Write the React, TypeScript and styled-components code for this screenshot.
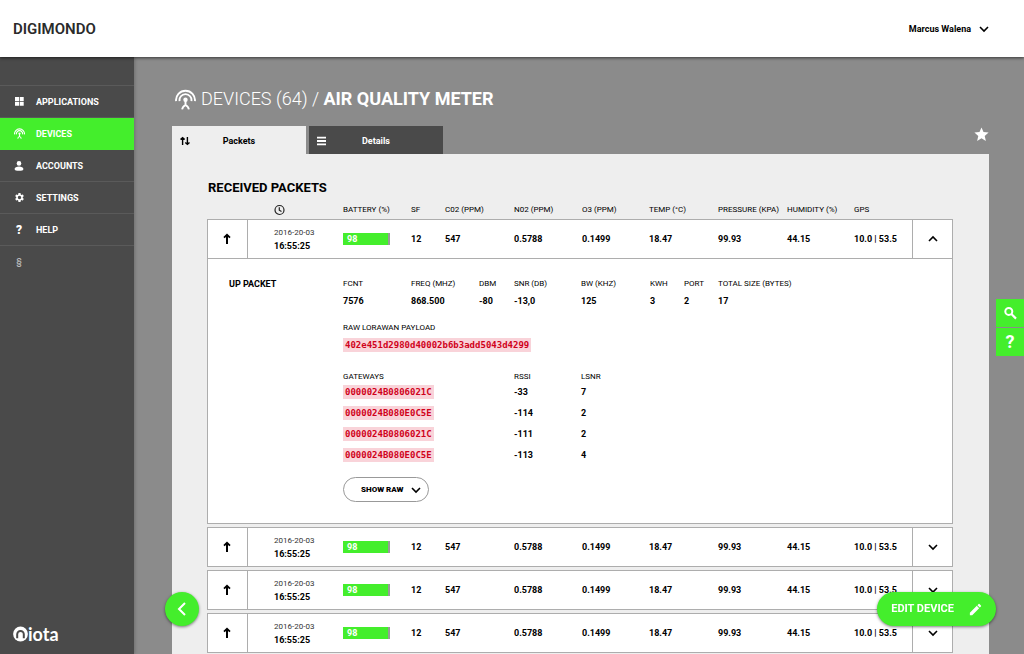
import React, { useState } from "react";
import styled, { createGlobalStyle, css } from "styled-components";
import { MdEdit, MdSettings, MdStar } from "react-icons/md";

const green = "#44ee2c";
const line = "#adadad";

const GlobalStyle = createGlobalStyle`
  * { box-sizing: border-box; }
  body {
    margin: 0;
    background: #8b8b8b;
    color: #000;
    font-family: Roboto, "Liberation Sans", sans-serif;
    font-size: 9px;
    line-height: 12px;
  }
  button { font: inherit; color: inherit; border: 0; padding: 0; background: none; cursor: pointer; }
  a { color: inherit; text-decoration: none; }
  h1, h2, h3, ul, dl, dd { margin: 0; padding: 0; font-size: inherit; list-style: none; }
  svg { display: block; flex: none; }
`;

const Shell = styled.div`
  min-height: 100vh;
  display: flex;
  flex-direction: column;
`;

const Header = styled.header`
  position: relative;
  z-index: 2;
  height: 57px;
  padding: 0 35px 0 13px;
  display: flex;
  align-items: center;
  justify-content: space-between;
  background: #fff;
  box-shadow: 0 1px 3px rgba(0, 0, 0, 0.6);
`;

const Brand = styled.a`
  font-size: 15px;
  line-height: 20px;
  font-weight: 600;
  color: #2b2b2b;
`;

const UserButton = styled.button`
  display: flex;
  align-items: center;
  gap: 8px;
  font-weight: 700;
`;

const Body = styled.div`
  flex: 1;
  display: flex;
`;

const Sidebar = styled.aside`
  width: 134px;
  flex: none;
  display: flex;
  flex-direction: column;
  justify-content: space-between;
  padding: 28px 0 11px;
  background: #4a4a4a;
  color: #fff;
  box-shadow: 1px 0 3px rgba(0, 0, 0, 0.2);
`;

const NavList = styled.ul`
  border-top: 1px solid #5a5a5a;
`;

const NavLink = styled.a<{ $active?: boolean; $quiet?: boolean }>`
  height: 32px;
  padding-left: 13px;
  display: grid;
  grid-template-columns: 12px 1fr;
  column-gap: 11px;
  align-items: center;
  justify-items: center;
  border-bottom: 1px solid #5a5a5a;
  font-weight: 700;

  span { justify-self: start; }

  ${(p) => p.$active && css`
    background: ${green};
    border-color: ${green};
  `}
  ${(p) => p.$quiet && css`
    border-color: transparent;
    color: #bbb;
    font-weight: 500;
  `}
`;

const Mark = styled.b`
  font-size: 12px;
`;

const Niota = styled.a`
  display: flex;
  align-items: center;
  padding-left: 13px;
  font: 700 18px/18px Lato, sans-serif;
`;

const Main = styled.main`
  flex: 1;
  min-width: 0;
  display: flex;
  flex-direction: column;
  padding: 28px 35px 0 38px;
`;

const Title = styled.h1`
  display: flex;
  align-items: center;
  gap: 5px;
  height: 28px;
  margin-bottom: 13px;
  padding-left: 3px;
  color: #fff;
  font-size: 18px;
  font-weight: 300;
  white-space: nowrap;

  b { font-weight: 700; }
`;

const TabBar = styled.div`
  display: flex;
  gap: 3px;
  height: 28px;
`;

const Tab = styled.button<{ $active?: boolean }>`
  width: 134px;
  display: grid;
  grid-template-columns: 10px 1fr 10px;
  align-items: center;
  padding: 2px 8px 0;
  font-weight: 700;
  background: ${(p) => (p.$active ? "#eee" : "#4a4a4a")};
  color: ${(p) => (p.$active ? "#000" : "#fff")};
`;

const StarButton = styled.button`
  margin: 0 -1px 0 auto;
  align-self: flex-start;
  color: #fff;
`;

const Panel = styled.section`
  flex: 1;
  padding: 26px 36px 0 35px;
  background: #eee;
`;

const PanelTitle = styled.h2`
  padding-left: 1px;
  font-size: 13px;
  line-height: 16px;
`;

const PacketTable = styled.table`
  width: 100%;
  margin-top: 7px;
  display: flex;
  flex-direction: column;
  gap: 3px;
`;

const HeadGroup = styled.thead`
  display: block;
  margin-bottom: -1px;
  border: solid transparent;
  border-width: 0 1px;
`;

const Packet = styled.tbody`
  display: block;
  background: #fff;
  border: 1px solid ${line};
`;

const PacketRow = styled.tr`
  display: grid;
  grid-template-columns: 40px 95fr 68fr 34fr 69fr 68fr 67fr 69fr 69fr 67fr 58fr 40px;
  align-items: center;
`;

const HeadCell = styled.th`
  height: 14px;
  padding: 0;
  font-size: 8px;
  line-height: 14px;
  font-weight: 400;
  text-align: left;
  white-space: nowrap;
`;

const ClockCell = styled(HeadCell)`
  padding-left: 26px;
`;

const Cell = styled.td`
  padding: 0;
  font-weight: 700;
  white-space: nowrap;
`;

const TimeCell = styled(Cell)`
  padding-left: 26px;

  small {
    display: block;
    margin-bottom: 1px;
    font-size: 8px;
    font-weight: 400;
    color: #333;
  }
`;

const EdgeCell = styled(Cell)<{ $side: "left" | "right" }>`
  height: 38px;
  display: grid;
  place-items: center;
  border-${(p) => p.$side}: 1px solid ${line};

  button {
    width: 100%;
    height: 100%;
    display: grid;
    place-items: center;
  }
`;

const Battery = styled.div`
  width: 47px;
  background: #999;
  color: #fff;
`;

const BatteryLevel = styled.div`
  height: 12px;
  padding-left: 4px;
  background: ${green};
`;

const DetailRow = styled.tr`
  display: block;
  border-top: 1px solid ${line};
`;

const DetailCell = styled.td`
  display: grid;
  grid-template-columns: 40px 95fr 68fr 68fr 35fr 67fr 69fr 34fr 34fr 234fr;
  padding: 19px 0 21px;
`;

const DetailTitle = styled.h3`
  grid-column: 1 / 3;
  padding-left: 21px;
`;

const FieldList = styled.dl`
  display: contents;
`;

const Field = styled.div`
  white-space: nowrap;

  dt { font-size: 8px; margin-bottom: 5px; }
  dd { font-weight: 700; }
`;

const PayloadField = styled.div`
  grid-column: 3 / -1;
  margin-top: 15px;

  dt { font-size: 8px; margin-bottom: 4px; }
  dd { display: flex; }
`;

const Code = styled.code`
  display: inline-block;
  padding: 0 2px;
  background: #f9d3d9;
  color: #d0021b;
  font: 700 9px/14px "DejaVu Sans Mono", monospace;
`;

const GatewayTable = styled.table`
  grid-column: 3 / -1;
  margin-top: 19px;
  border-spacing: 0;

  thead, tbody { display: block; }
  tbody { display: grid; row-gap: 7px; margin-top: 2px; }
  tr { display: grid; grid-template-columns: 171fr 67fr 371fr; }
  th, td { padding: 0; text-align: left; }
  th { font-size: 8px; font-weight: 400; }
  td { font-weight: 700; display: flex; align-items: center; height: 14px; }
`;

const RawButton = styled.button`
  grid-column: 3 / -1;
  justify-self: start;
  margin-top: 15px;
  width: 86px;
  height: 25px;
  padding: 0 7px 0 17px;
  display: flex;
  align-items: center;
  justify-content: space-between;
  border: 1px solid #999;
  border-radius: 13px;
  font-size: 8px;
  font-weight: 900;
`;

const SideTools = styled.div`
  position: fixed;
  right: 0;
  top: 299px;
  z-index: 3;
  display: grid;
  gap: 1px;
`;

const ToolButton = styled.button`
  width: 28px;
  height: 28px;
  display: grid;
  place-items: center;
  background: ${green};
  color: #fff;
  font-size: 18px;
  font-weight: 700;
`;

const FloatingButton = styled.button`
  position: fixed;
  bottom: 28px;
  z-index: 3;
  height: 34px;
  display: flex;
  align-items: center;
  justify-content: center;
  border-radius: 17px;
  background: ${green};
  color: #fff;
  box-shadow: 0 1px 3px rgba(0, 0, 0, 0.5);
`;

const BackButton = styled(FloatingButton)`
  left: 165px;
  width: 34px;
`;

const EditButton = styled(FloatingButton)`
  right: 28px;
  gap: 14px;
  padding: 0 13px 0 14px;
  font-size: 11px;
  font-weight: 700;
`;

const Chevron = ({ up }: { up?: boolean }) => (
  <svg width="10" height="10" viewBox="0 0 10 10" fill="none" stroke="currentColor" strokeWidth="1.6">
    <path d={up ? "M1 7l4-4 4 4" : "M1 3l4 4 4-4"} />
  </svg>
);

const ArrowUp = () => (
  <svg width="9" height="12" viewBox="0 0 9 12" fill="none" stroke="currentColor">
    <path d="M4 11V2" strokeWidth="2" />
    <path d="M1 4.6L4 1.8l3 2.800" strokeWidth="1.8" />
  </svg>
);

const SwapIcon = () => (
  <svg width="10" height="10" viewBox="0 0 10 10" fill="none" stroke="currentColor" strokeWidth="1.4">
    <path d="M2.6 9V1.6M.5 3.6l2.100-2 2.100 2M7.400 1v7.400M5.300 6.400l2.100 2 2.100-2" />
  </svg>
);

const MenuIcon = () => (
  <svg width="10" height="10" viewBox="0 0 10 10" stroke="currentColor" strokeWidth="1.8">
    <path d="M0 1.6h9M0 5h9M0 8.400h9" />
  </svg>
);

const Antenna = ({ size, weight }: { size: number; weight: number }) => (
  <svg width={size} height={size} viewBox="0 0 20 20" fill="none" stroke="currentColor" strokeWidth={weight}>
    <path d="M1 11.600a9.050 9.050 0 1 1 18 0M4.400 11.600a5.700 5.700 0 1 1 11.200 0" />
    <circle cx="10" cy="10.200" r="2.100" fill="currentColor" stroke="none" />
    <path d="M10 11v4.600M6.800 19.400c.2-2 1.400-3.200 3.200-4.200 1.800 1 3 2.200 3.200 4.200" />
  </svg>
);

const GridIcon = () => (
  <svg width="9" height="9" viewBox="0 0 9 9" fill="currentColor">
    <path d="M0 0h4v4H0zM4.700 0h4v4h-4zM0 4.700h4v4H0zM4.700 4.700h4v4h-4z" />
  </svg>
);

const PersonIcon = () => (
  <svg width="10" height="10" viewBox="0 0 10 10" fill="currentColor">
    <circle cx="5" cy="2.400" r="2.300" />
    <path d="M.6 8c0-1.600 2-2.500 4.400-2.500S9.400 6.400 9.400 8 7.400 9.800 5 9.800.6 9.600.6 8z" />
  </svg>
);

const ClockIcon = () => (
  <svg width="11" height="14" viewBox="0 0 11 14" fill="none" stroke="#222" strokeWidth="1.2">
    <circle cx="5.500" cy="7" r="4.500" />
    <path d="M5.300 4.200v3l2.200 1.400" />
  </svg>
);

const SearchIcon = () => (
  <svg width="14" height="14" viewBox="0 0 14 14" fill="none" stroke="currentColor" strokeWidth="2">
    <circle cx="5.800" cy="5.400" r="3.500" />
    <path d="M8.400 8l4.600 4.600" strokeWidth="2.200" />
  </svg>
);

const NiotaMark = () => (
  <svg width="15" height="16" viewBox="0 0 15 16">
    <circle cx="7.500" cy="8" r="7.400" fill="#fff" />
    <path d="M4.200 12.200V8.200a3.300 3.300 0 0 1 6.600 0v4" fill="none" stroke="#4a4a4a" strokeWidth="2" />
  </svg>
);

const navItems = [
  { label: "APPLICATIONS", icon: <GridIcon /> },
  { label: "DEVICES", icon: <Antenna size={11} weight={2} />, active: true },
  { label: "ACCOUNTS", icon: <PersonIcon /> },
  { label: "SETTINGS", icon: <MdSettings size={11} /> },
  { label: "HELP", icon: <Mark>?</Mark> },
];

const columns = ["BATTERY (%)", "SF", "C02 (PPM)", "N02 (PPM)", "O3 (PPM)", "TEMP (°C)", "PRESSURE (KPA)", "HUMIDITY (%)", "GPS"];

const reading = {
  date: "2016-20-03",
  time: "16:55:25",
  battery: 98,
  values: ["12", "547", "0.5788", "0.1499", "18.47", "99.93", "44.15", "10.0 | 53.5"],
};
const packets = [reading, reading, reading, reading];

const fields = [
  ["FCNT", "7576"],
  ["FREQ (MHZ)", "868.500"],
  ["DBM", "-80"],
  ["SNR (DB)", "-13,0"],
  ["BW (KHZ)", "125"],
  ["KWH", "3"],
  ["PORT", "2"],
  ["TOTAL SIZE (BYTES)", "17"],
];

const gateways = [
  ["0000024B0806021C", "-33", "7"],
  ["0000024B080E0C5E", "-114", "2"],
  ["0000024B0806021C", "-111", "2"],
  ["0000024B080E0C5E", "-113", "4"],
];

const PacketDetail = () => (
  <DetailRow>
    <DetailCell colSpan={12}>
      <DetailTitle>UP PACKET</DetailTitle>
      <FieldList>
        {fields.map(([name, value]) => (
          <Field key={name}>
            <dt>{name}</dt>
            <dd>{value}</dd>
          </Field>
        ))}
        <PayloadField>
          <dt>RAW LORAWAN PAYLOAD</dt>
          <dd><Code>402e451d2980d40002b6b3add5043d4299</Code></dd>
        </PayloadField>
      </FieldList>
      <GatewayTable>
        <thead>
          <tr><th>GATEWAYS</th><th>RSSI</th><th>LSNR</th></tr>
        </thead>
        <tbody>
          {gateways.map(([id, rssi, lsnr], i) => (
            <tr key={i}><td><Code>{id}</Code></td><td>{rssi}</td><td>{lsnr}</td></tr>
          ))}
        </tbody>
      </GatewayTable>
      <RawButton>SHOW RAW <Chevron /></RawButton>
    </DetailCell>
  </DetailRow>
);

export default function App() {
  const [open, setOpen] = useState(0);

  return (
    <Shell>
      <GlobalStyle />
      <Header>
        <Brand href="#">DIGIMONDO</Brand>
        <UserButton>Marcus Walena <Chevron /></UserButton>
      </Header>
      <Body>
        <Sidebar>
          <nav>
            <NavList>
              {navItems.map((item) => (
                <li key={item.label}>
                  <NavLink href="#" $active={item.active}>{item.icon}<span>{item.label}</span></NavLink>
                </li>
              ))}
              <li><NavLink href="#" $quiet>§</NavLink></li>
            </NavList>
          </nav>
          <Niota href="#"><NiotaMark />iota</Niota>
        </Sidebar>
        <Main>
          <Title><Antenna size={21} weight={1.8} /><span>DEVICES (64) / <b>AIR QUALITY METER</b></span></Title>
          <TabBar>
            <Tab $active><SwapIcon />Packets</Tab>
            <Tab><MenuIcon />Details</Tab>
            <StarButton aria-label="Favourite"><MdStar size={17} /></StarButton>
          </TabBar>
          <Panel>
            <PanelTitle>RECEIVED PACKETS</PanelTitle>
            <PacketTable>
              <HeadGroup>
                <PacketRow>
                  <HeadCell />
                  <ClockCell aria-label="Time"><ClockIcon /></ClockCell>
                  {columns.map((name) => <HeadCell key={name}>{name}</HeadCell>)}
                  <HeadCell />
                </PacketRow>
              </HeadGroup>
              {packets.map((packet, i) => (
                <Packet key={i}>
                  <PacketRow>
                    <EdgeCell $side="right"><ArrowUp /></EdgeCell>
                    <TimeCell><small>{packet.date}</small>{packet.time}</TimeCell>
                    <Cell>
                      <Battery>
                        <BatteryLevel style={{ width: `${packet.battery - 2}%` }}>{packet.battery}</BatteryLevel>
                      </Battery>
                    </Cell>
                    {packet.values.map((value, n) => <Cell key={n}>{value}</Cell>)}
                    <EdgeCell $side="left">
                      <button aria-label="Toggle details" onClick={() => setOpen(open === i ? -1 : i)}>
                        <Chevron up={open === i} />
                      </button>
                    </EdgeCell>
                  </PacketRow>
                  {open === i && <PacketDetail />}
                </Packet>
              ))}
            </PacketTable>
          </Panel>
        </Main>
      </Body>
      <SideTools>
        <ToolButton aria-label="Search"><SearchIcon /></ToolButton>
        <ToolButton>?</ToolButton>
      </SideTools>
      <BackButton aria-label="Back">
        <svg width="10" height="14" viewBox="0 0 10 14" fill="none" stroke="currentColor" strokeWidth="2">
          <path d="M8 1L2 7l6 6" />
        </svg>
      </BackButton>
      <EditButton>EDIT DEVICE <MdEdit size={15} /></EditButton>
    </Shell>
  );
}
